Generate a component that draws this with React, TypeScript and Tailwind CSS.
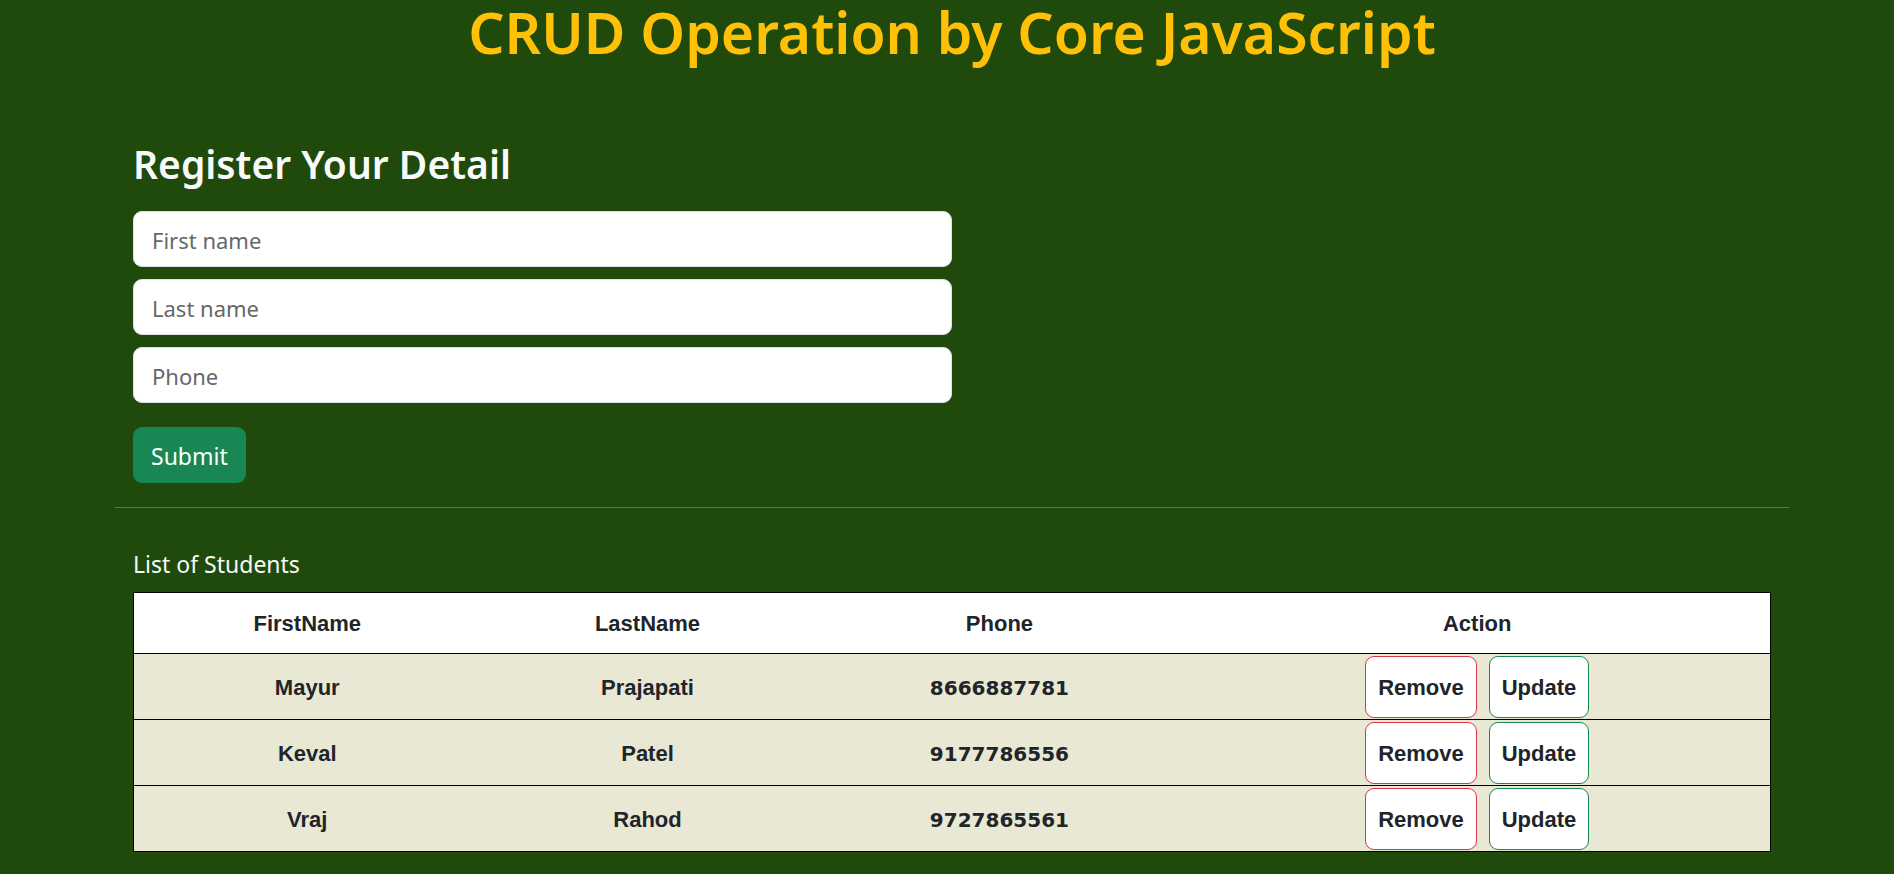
import { useState } from "react";

const students = [
  { first: "Mayur", last: "Prajapati", phone: "8666887781" },
  { first: "Keval", last: "Patel", phone: "9177786556" },
  { first: "Vraj", last: "Rahod", phone: "9727865561" },
];

const fields = [
  { id: "firstName", label: "First name", type: "text" },
  { id: "lastName", label: "Last name", type: "text" },
  { id: "phone", label: "Phone", type: "tel" },
];

export default function App() {
  const [values, setValues] = useState<Record<string, string>>({});

  return (
    <main className="min-h-screen bg-[#20490c] pb-5 pl-2.5 font-['Noto_Sans',sans-serif] text-[#f8f9fa]">
      <h1 className="text-center text-[57px] leading-[64px] font-semibold text-[#ffc107]">
        CRUD Operation by Core JavaScript
      </h1>

      <div className="mx-auto w-full max-w-[1674px] pt-[75px]">
        <form className="px-[18px]" onSubmit={(event) => event.preventDefault()}>
          <h2 className="mb-[22px] text-[39px] leading-[50px] font-semibold">Register Your Detail</h2>
          <div className="flex w-1/2 flex-col gap-3">
            {fields.map((field) => (
              <input
                key={field.id}
                id={field.id}
                type={field.type}
                aria-label={field.label}
                placeholder={field.label}
                value={values[field.id] ?? ""}
                onChange={(event) => setValues({ ...values, [field.id]: event.target.value })}
                className="h-14 w-full rounded-[9px] border border-[#dee2e6] bg-white px-[18px] pt-0.5 text-[22px] text-[#212529] placeholder:text-[#65686b]"
              />
            ))}
          </div>
          <button
            type="submit"
            className="mt-6 h-14 rounded-[9px] bg-[#198754] px-[18px] pt-0.5 text-[23px] text-white"
          >
            Submit
          </button>
        </form>

        <hr className="mt-6 border-[#4f7c40]" />

        <section className="px-[18px] pt-[38px]">
          <h2 id="students" className="mb-2.5 text-[23px] leading-9">List of Students</h2>
          <table
            aria-labelledby="students"
            className="w-full table-fixed border-collapse border border-black text-center font-['Liberation_Sans',sans-serif] text-[22px] font-bold text-[#212529]"
          >
            <colgroup>
              <col className="w-[21.2%]" />
              <col className="w-[20.4%]" />
              <col className="w-[22.6%]" />
              <col className="w-[35.8%]" />
            </colgroup>
            <thead>
              <tr className="h-[61px] border-b border-black bg-white">
                <th>FirstName</th>
                <th>LastName</th>
                <th>Phone</th>
                <th>Action</th>
              </tr>
            </thead>
            <tbody>
              {students.map((student) => (
                <tr key={student.phone} className="border-b border-black bg-[#e8e8d4]">
                  <td className="pt-0.5">{student.first}</td>
                  <td className="pt-0.5">{student.last}</td>
                  <td className="pt-0.5 font-['DejaVu_Sans',sans-serif] text-[20px]">{student.phone}</td>
                  <td className="pt-0.5 pb-px">
                    <div className="flex justify-center gap-3">
                      <button type="button" className="h-[62px] rounded-[9px] border border-[#dc3545] bg-white px-3">
                        Remove
                      </button>
                      <button type="button" className="h-[62px] rounded-[9px] border border-[#198754] bg-white px-3">
                        Update
                      </button>
                    </div>
                  </td>
                </tr>
              ))}
            </tbody>
          </table>
        </section>
      </div>
    </main>
  );
}
